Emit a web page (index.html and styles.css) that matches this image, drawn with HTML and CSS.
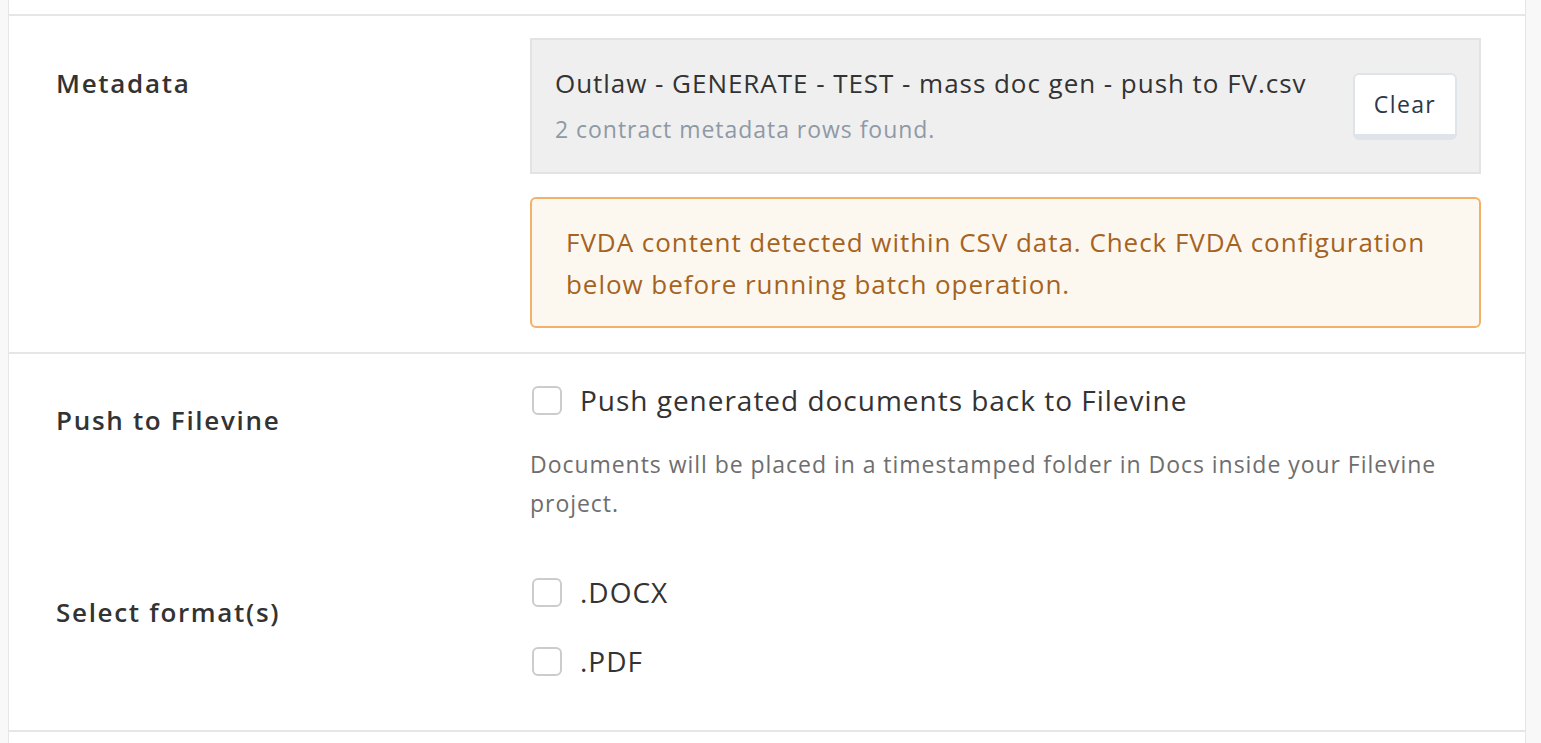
FILE: index.html
```html
<!DOCTYPE html>
<html lang="en">
<head>
  <meta charset="UTF-8">
  <meta name="viewport" content="width=device-width, initial-scale=1.0">
  <title>Batch Generate</title>
  <link rel="stylesheet" href="styles.css">
</head>
<body>
  <div class="panel">
    <div class="section section-top"></div>

    <div class="section section-meta">
      <div class="row">
        <div class="row-label label-meta">Metadata</div>
        <div class="row-content">
          <div class="file-box">
            <div class="file-info">
              <div class="file-name">Outlaw - GENERATE - TEST - mass doc gen - push to FV.csv</div>
              <div class="file-note">2 contract metadata rows found.</div>
            </div>
            <button class="btn-clear" type="button">Clear</button>
          </div>
          <div class="warning">
            FVDA content detected within CSV data. Check FVDA configuration below before running batch operation.
          </div>
        </div>
      </div>
    </div>

    <div class="section section-push">
      <div class="row">
        <div class="row-label">Push to Filevine</div>
        <div class="row-content">
          <label class="check">
            <input type="checkbox">
            <span class="box"></span>
            <span>Push generated documents back to Filevine</span>
          </label>
          <p class="help">Documents will be placed in a timestamped folder in Docs inside your Filevine project.</p>
        </div>
      </div>

      <div class="row row-format">
        <div class="row-label">Select format(s)</div>
        <div class="row-content options">
          <label class="check">
            <input type="checkbox">
            <span class="box"></span>
            <span>.DOCX</span>
          </label>
          <label class="check">
            <input type="checkbox">
            <span class="box"></span>
            <span>.PDF</span>
          </label>
        </div>
      </div>
    </div>

    <div class="section section-bottom"></div>
  </div>
</body>
</html>
```

FILE: styles.css
```css
html, body {
  height: 100%;
}

body {
  margin: 0;
  padding: 0 15px 0 8px;
  background-color: #f8f8f8;
  font-family: 'Open Sans', 'Liberation Sans', sans-serif;
  letter-spacing: 0.06em;
  color: #333333;
  overflow: hidden;
}

.panel {
  background-color: #ffffff;
  border-left: 1px solid #e6e6e6;
  border-right: 1px solid #e6e6e6;
  min-height: 100%;
}

.section {
  border-bottom: 2px solid #e6e6e6;
  padding: 0 44px 0 47px;
}

.section-top {
  height: 14px;
}

.section-meta {
  padding-top: 22px;
  padding-bottom: 24px;
}

.section-push {
  padding-top: 23px;
  padding-bottom: 46px;
}

.section-bottom {
  border-bottom: none;
  height: 20px;
}

.row {
  display: grid;
  grid-template-columns: 474px 1fr;
}

.row-label {
  font-size: 26px;
  font-weight: 600;
  line-height: 30px;
  padding-top: 28px;
  letter-spacing: 0.065em;
  color: #333333;
}

.label-meta {
  padding-top: 30px;
}

.row-format {
  margin-top: 46px;
}

/* metadata file */
.file-box {
  display: flex;
  align-items: center;
  justify-content: space-between;
  background-color: #efefef;
  border: 2px solid #e3e3e3;
  padding: 20px 22px 20px 23px;
}

.file-name {
  font-size: 26px;
  line-height: 46px;
  color: #333333;
}

.file-note {
  font-size: 23px;
  line-height: 46px;
  color: #8e99a6;
}

.btn-clear {
  font-family: inherit;
  font-size: 23px;
  letter-spacing: 0.06em;
  color: #2d3748;
  background-color: #ffffff;
  border: 2px solid #dfe3ea;
  border-bottom-width: 6px;
  border-radius: 6px;
  width: 104px;
  height: 67px;
  cursor: pointer;
}

.warning {
  margin-top: 23px;
  background-color: #fdf8ef;
  border: 2px solid #f2b068;
  border-radius: 6px;
  padding: 22px 36px 21px 34px;
  font-size: 26px;
  line-height: 42px;
  color: #a5631f;
}

/* checkboxes */
.check {
  display: flex;
  align-items: center;
  height: 46px;
  font-size: 28px;
  letter-spacing: 0.035em;
  color: #333333;
  cursor: pointer;
}

.check input {
  display: none;
}

.check .box {
  width: 26px;
  height: 25px;
  margin: 0 18px 0 2px;
  border: 2px solid #cccccc;
  border-radius: 6px;
  background-color: #ffffff;
}

.help {
  margin: 22px 0 0;
  font-size: 23px;
  line-height: 39px;
  color: #6e6e6e;
}

.options {
  display: flex;
  flex-direction: column;
  gap: 23px;
}
```
